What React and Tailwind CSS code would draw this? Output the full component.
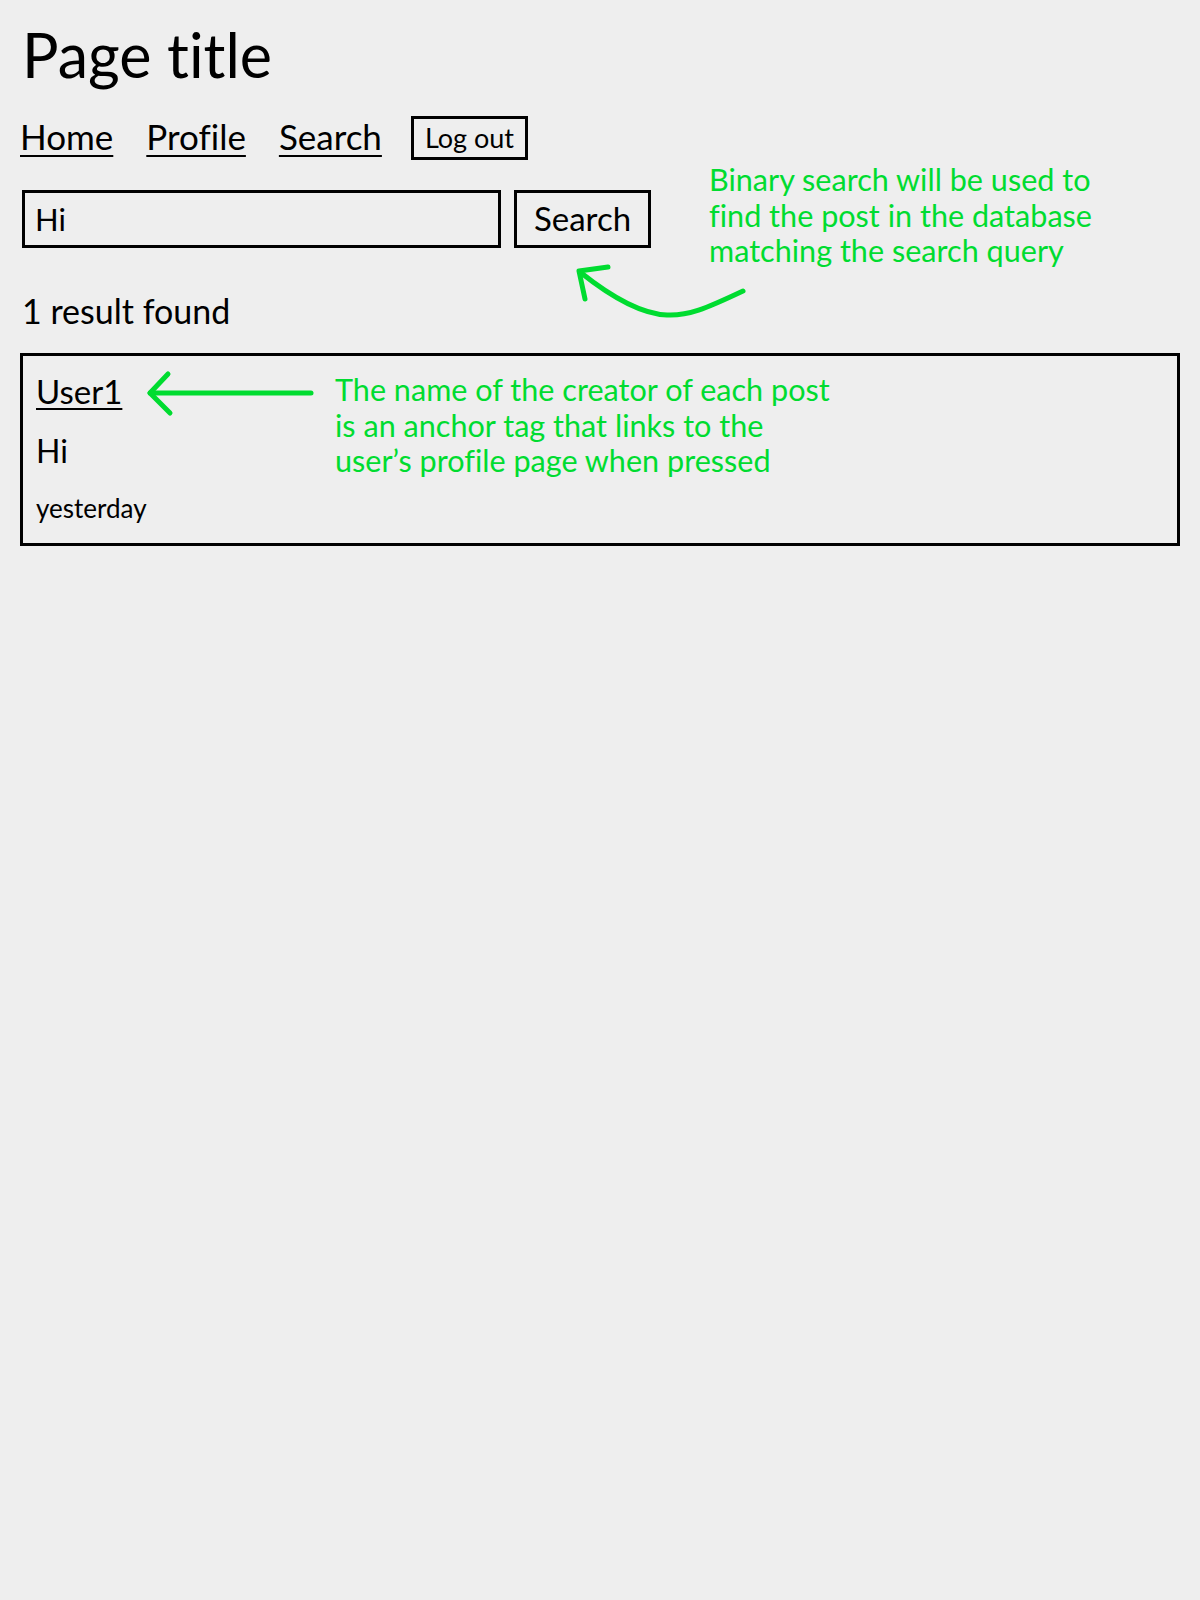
import React from 'react'

function Annotations() {
  return (
    <>
      <svg className="absolute left-0 top-0 pointer-events-none" width="1200" height="600" viewBox="0 0 1200 600" fill="none" stroke="#00dc30" strokeWidth="5" strokeLinecap="round" strokeLinejoin="round">
        <path d="M743 291 C705 309 688 316 667 315 C640 314 610 296 580 272" />
        <path d="M608 267 L579 271 L585 299" />
        <path d="M311 393 L150 393" />
        <path d="M168 374 L150 393 L170 413" />
      </svg>
      <p className="absolute left-[709px] top-[162px] text-[30.6px] leading-[35.5px] text-[#00dc30]">
        Binary search will be used to
        <br />
        find the post in the database
        <br />
        matching the search query
      </p>
      <p className="absolute left-[335px] top-[372px] text-[30.6px] leading-[35.5px] text-[#00dc30]">
        The name of the creator of each post
        <br />
        is an anchor tag that links to the
        <br />
        user’s profile page when pressed
      </p>
    </>
  )
}

export default function App() {
  return (
    <div className="relative min-h-[1600px] bg-[#eeeeee] px-5 pt-[21px] font-['Lato',sans-serif] text-black [font-variant-ligatures:no-common-ligatures]">
      <h1 className="pl-[2px] text-[61px] leading-[68px]">Page title</h1>

      <nav className="mt-[27px] flex items-center gap-[33px] text-[35px] leading-[41px]">
        <a href="#" className="mb-[3px] underline underline-offset-[5px] decoration-2">Home</a>
        <a href="#" className="mb-[3px] underline underline-offset-[5px] decoration-2">Profile</a>
        <a href="#" className="mb-[3px] underline underline-offset-[5px] decoration-2">Search</a>
        <button className="-ml-[4px] h-[44px] border-[3px] border-black px-[11px] text-[27px] leading-[38px]">Log out</button>
      </nav>

      <form className="mt-[30px] flex items-stretch gap-[13px] pl-[2px]" onSubmit={(e) => e.preventDefault()}>
        <input
          defaultValue="Hi"
          className="h-[58px] w-[479px] border-[3px] border-black bg-transparent px-[10px] text-[31px] outline-none"
        />
        <button className="h-[58px] w-[137px] border-[3px] border-black text-[33px]">Search</button>
      </form>

      <p className="mt-[43px] pl-[2px] text-[34px] leading-[40px]">1 result found</p>

      <div className="mt-[22px] border-[3px] border-black px-[13px] pt-[15px] pb-[19px]">
        <a href="#" className="block w-fit text-[33px] leading-[40px] underline underline-offset-[4px] decoration-2">User1</a>
        <p className="mt-[20px] text-[32px] leading-[40px]">Hi</p>
        <p className="mt-[21px] text-[26px] leading-[32px]">yesterday</p>
      </div>

      <Annotations />
    </div>
  )
}
